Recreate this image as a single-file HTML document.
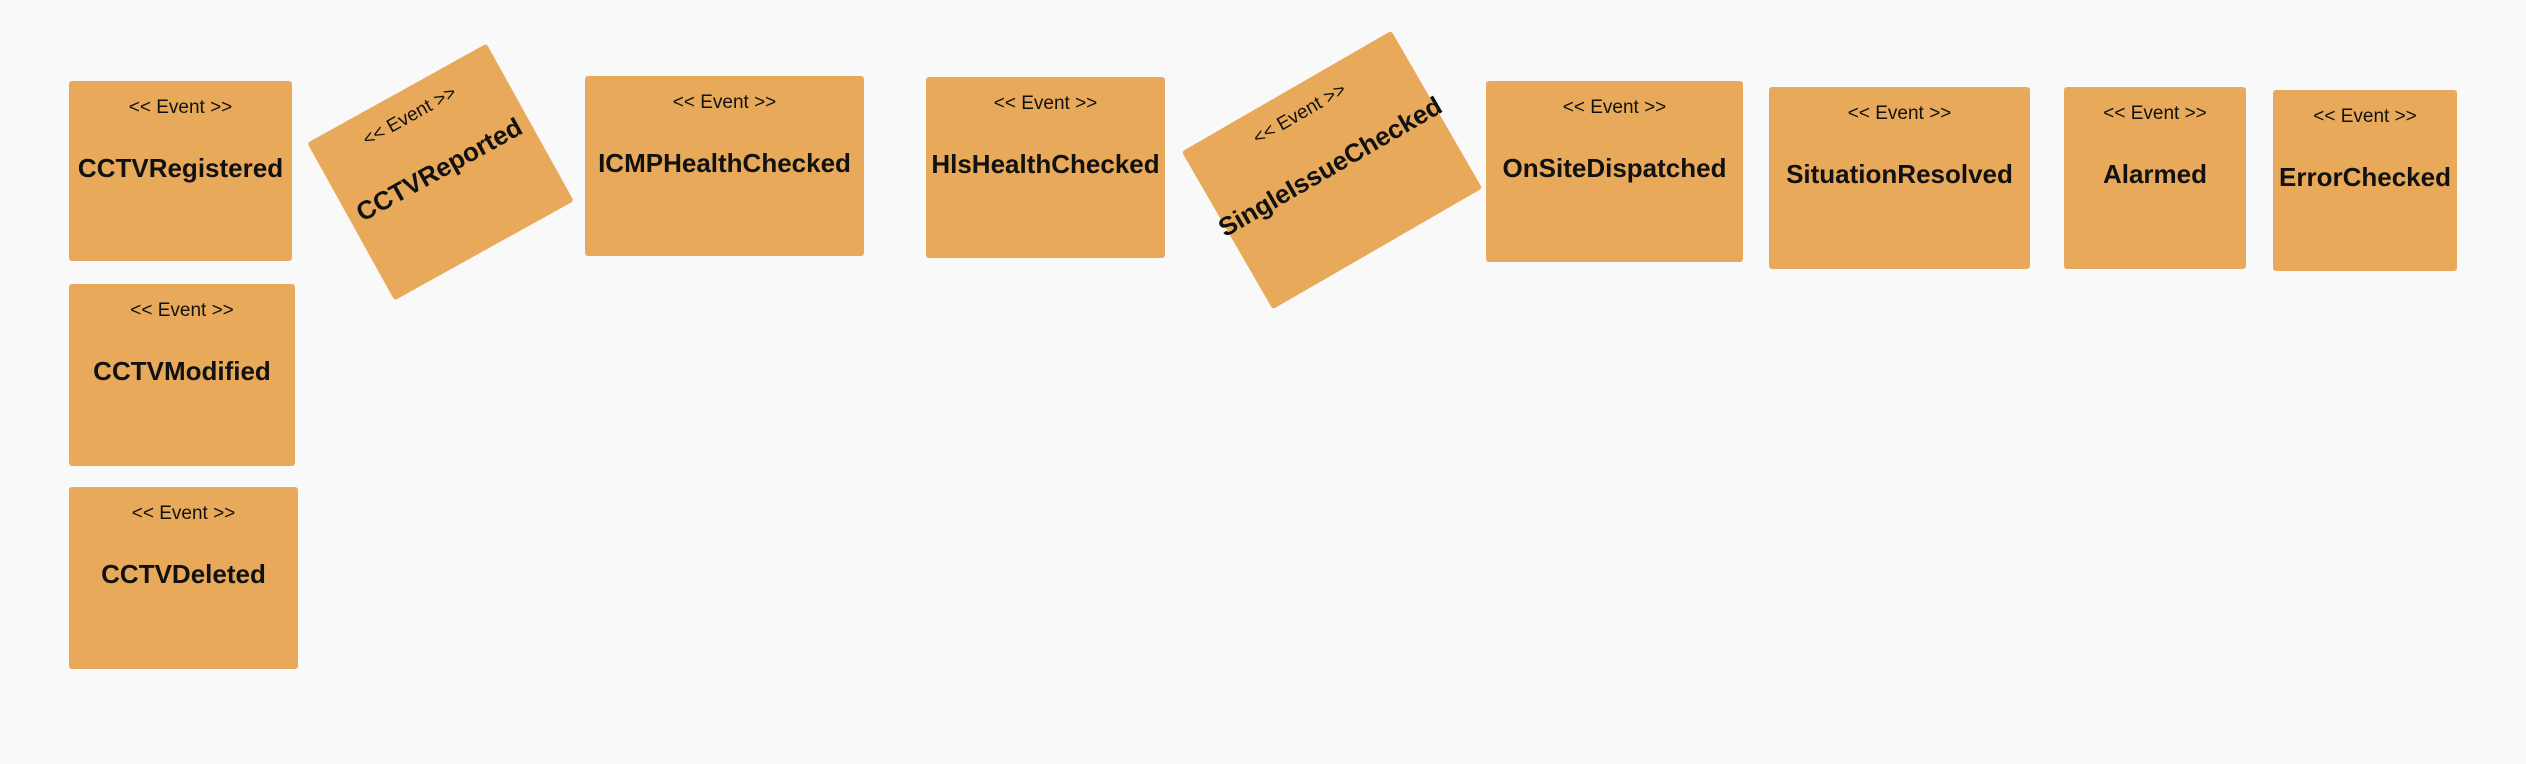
<!DOCTYPE html>
<html><head><meta charset="utf-8"><style>
html,body{margin:0;padding:0;background:#f9f9f9;width:2526px;height:764px;overflow:hidden;position:relative;font-family:"Liberation Sans",sans-serif;}
.b{position:absolute;background:#e8aa5a;border-radius:3px;color:#111;}
.e{position:absolute;left:0;right:0;top:15px;text-align:center;font-size:19px;line-height:24px;}
.t{position:absolute;left:-20px;right:-20px;top:70px;text-align:center;font-size:26px;font-weight:bold;line-height:34px;}
</style></head><body>
<div class="b" style="left:69px;top:81px;width:223px;height:180px"><div class="e">&lt;&lt; Event &gt;&gt;</div><div class="t">CCTVRegistered</div></div>
<div class="b" style="left:69px;top:284px;width:226px;height:182px"><div class="e">&lt;&lt; Event &gt;&gt;</div><div class="t">CCTVModified</div></div>
<div class="b" style="left:69px;top:487px;width:229px;height:182px"><div class="e">&lt;&lt; Event &gt;&gt;</div><div class="t">CCTVDeleted</div></div>
<div class="b" style="left:338px;top:82px;width:205px;height:180px;transform:rotate(-29deg)"><div class="e">&lt;&lt; Event &gt;&gt;</div><div class="t">CCTVReported</div></div>
<div class="b" style="left:585px;top:76px;width:279px;height:180px"><div class="e">&lt;&lt; Event &gt;&gt;</div><div class="t">ICMPHealthChecked</div></div>
<div class="b" style="left:926px;top:77px;width:239px;height:181px"><div class="e">&lt;&lt; Event &gt;&gt;</div><div class="t">HlsHealthChecked</div></div>
<div class="b" style="left:1211px;top:79px;width:242px;height:182px;transform:rotate(-30deg)"><div class="e">&lt;&lt; Event &gt;&gt;</div><div class="t">SingleIssueChecked</div></div>
<div class="b" style="left:1486px;top:81px;width:257px;height:181px"><div class="e">&lt;&lt; Event &gt;&gt;</div><div class="t">OnSiteDispatched</div></div>
<div class="b" style="left:1769px;top:87px;width:261px;height:182px"><div class="e">&lt;&lt; Event &gt;&gt;</div><div class="t">SituationResolved</div></div>
<div class="b" style="left:2064px;top:87px;width:182px;height:182px"><div class="e">&lt;&lt; Event &gt;&gt;</div><div class="t">Alarmed</div></div>
<div class="b" style="left:2273px;top:90px;width:184px;height:181px"><div class="e">&lt;&lt; Event &gt;&gt;</div><div class="t">ErrorChecked</div></div>
</body></html>
